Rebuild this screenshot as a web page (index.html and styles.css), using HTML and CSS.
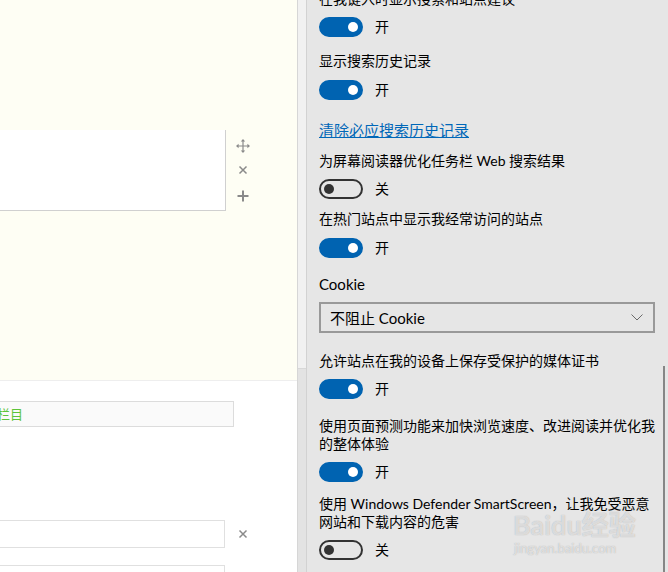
FILE: index.html
```html
<!DOCTYPE html>
<html lang="zh-CN">
<head>
    <meta charset="UTF-8">
    <meta name="viewport" content="width=device-width, initial-scale=1.0">
    <title>高级设置</title>
    <link rel="stylesheet" href="styles.css">
</head>
<body>
<div class="screen">

    <!-- 左侧：被设置面板遮住的网页 -->
    <div class="page">
        <div class="page-top">
            <div class="widget-row">
                <div class="widget-box"></div>
                <div class="widget-tools">
                    <svg class="tool-move" width="14" height="14" viewBox="0 0 14 14">
                        <path d="M7 1v12M1 7h12" stroke="#8a8a8a" stroke-width="1.2" fill="none"/>
                        <path d="M7 0l2.2 2.6H4.8zM7 14l2.2-2.6H4.8zM0 7l2.6-2.2v4.4zM14 7l-2.6-2.2v4.4z" fill="#8a8a8a"/>
                    </svg>
                    <svg width="10" height="10" viewBox="0 0 10 10">
                        <path d="M1.5 1.5l7 7M8.5 1.5l-7 7" stroke="#8a8a8a" stroke-width="1.5"/>
                    </svg>
                    <svg width="12" height="12" viewBox="0 0 12 12">
                        <path d="M6 0.5v11M0.5 6h11" stroke="#8a8a8a" stroke-width="2"/>
                    </svg>
                </div>
            </div>
        </div>
        <div class="page-bottom">
            <div class="field">栏目</div>
            <div class="widget-row input-row">
                <div class="input-box"></div>
                <svg class="input-close" width="10" height="10" viewBox="0 0 10 10">
                    <path d="M1.5 1.5l7 7M8.5 1.5l-7 7" stroke="#8a8a8a" stroke-width="1.5"/>
                </svg>
            </div>
            <div class="input-box input-last"></div>
        </div>
    </div>

    <div class="page-scroll"><div class="page-thumb"></div></div>

    <!-- 右侧：高级设置面板 -->
    <div class="panel">
        <div class="panel-body">
            <div class="setting first">
                <div class="label">在我键入时显示搜索和站点建议</div>
                <div class="switch-row"><span class="toggle on"><i></i></span>开</div>
            </div>
            <div class="setting s2">
                <div class="label">显示搜索历史记录</div>
                <div class="switch-row"><span class="toggle on"><i></i></span>开</div>
            </div>
            <a class="link" href="#">清除必应搜索历史记录</a>
            <div class="setting s3">
                <div class="label">为屏幕阅读器优化任务栏 Web 搜索结果</div>
                <div class="switch-row"><span class="toggle"><i></i></span>关</div>
            </div>
            <div class="setting s4">
                <div class="label">在热门站点中显示我经常访问的站点</div>
                <div class="switch-row"><span class="toggle on"><i></i></span>开</div>
            </div>
            <div class="cookie">
                <div class="cookie-label">Cookie</div>
                <div class="select">
                    <span>不阻止 Cookie</span>
                    <svg width="12" height="7" viewBox="0 0 12 7">
                        <path d="M0.5 0.5l5.5 5.5 5.5-5.5" stroke="#6a6a6a" stroke-width="1" fill="none"/>
                    </svg>
                </div>
            </div>
            <div class="setting s5">
                <div class="label">允许站点在我的设备上保存受保护的媒体证书</div>
                <div class="switch-row"><span class="toggle on"><i></i></span>开</div>
            </div>
            <div class="setting s6">
                <div class="label multi">使用页面预测功能来加快浏览速度、改进阅读并优化我的整体体验</div>
                <div class="switch-row"><span class="toggle on"><i></i></span>开</div>
            </div>
            <div class="setting s7">
                <div class="label multi">使用 Windows Defender SmartScreen，让我免受恶意<br>网站和下载内容的危害</div>
                <div class="switch-row"><span class="toggle"><i></i></span>关</div>
            </div>
        </div>

        <div class="panel-scroll"></div>

        <div class="watermark">
            <div class="wm-logo">Baidu经验</div>
            <div class="wm-url">jingyan.baidu.com</div>
        </div>
    </div>

</div>
</body>
</html>
```

FILE: styles.css
```css
/* 整体 */
body { margin: 0; font-family: Lato, "Noto Sans CJK SC", sans-serif; }
.screen { display: flex; width: 668px; height: 572px; overflow: hidden; }

/* 左侧网页 */
.page { width: 297px; flex: none; display: flex; flex-direction: column; }
.page-top { flex: none; height: 380px; background-color: #fefef4; padding-top: 130px; box-sizing: border-box; }
.widget-row { display: flex; align-items: flex-start; }
.widget-box { width: 225px; height: 80px; background-color: #fff; border-right: 1px solid #d0d0d0; border-bottom: 1px solid #d0d0d0; }
.widget-tools { display: flex; flex-direction: column; align-items: center; width: 14px; margin-left: 10px; padding-top: 9px; gap: 12px; }
.widget-tools svg:nth-child(3) { margin-top: 3px; }
.page-bottom { flex: 1; background-color: #fff; border-top: 1px solid #eeeeee; padding-top: 20px; }
.field { width: 233px; height: 24px; line-height: 24px; background-color: #fafafa; border: 1px solid #dcdcdc; border-left: none; color: #5cc43a; font-size: 13px; font-family: "Noto Sans CJK SC", sans-serif; text-indent: -3px; overflow: hidden; }
.input-row { margin-top: 93px; align-items: center; }
.input-box { width: 225px; height: 28px; border: 1px solid #e0e0e0; border-left: none; box-sizing: border-box; }
.input-close { margin-left: 13px; }
.input-last { margin-top: 17px; height: 30px; }

/* 网页滚动条 */
.page-scroll { width: 10px; flex: none; box-sizing: border-box; border-left: 1px solid #d6d6d6; border-right: 1px solid #d2d2d2; background-color: #e3e3e3; }
.page-thumb { height: 368px; background-color: #f1f1f1; border-bottom: 1px solid #d8d8d8; }

/* 设置面板 */
.panel { flex: 1; position: relative; background-color: #e6e6e6; color: #000; overflow: hidden; }
.panel-body { padding: 0 13px 0 12px; display: flex; flex-direction: column; align-items: flex-start; }
.setting { display: flex; flex-direction: column; align-items: flex-start; }
.label { font-size: 14px; line-height: 20px; }
.label.multi { line-height: 17.5px; }
.switch-row { display: flex; align-items: center; gap: 12px; font-size: 14px; line-height: 20px; margin-top: 8px; }

.toggle { width: 44px; height: 20px; border-radius: 10px; box-sizing: border-box; display: flex; align-items: center; border: 2px solid #333; padding: 0 3px; }
.toggle i { width: 10px; height: 10px; border-radius: 50%; background-color: #333; }
.toggle.on { background-color: #0063b1; border-color: #0063b1; justify-content: flex-end; }
.toggle.on i { background-color: #fff; }

.first { margin-top: -11px; }
.s2 { margin-top: 14px; }
.s2 .switch-row { margin-top: 9px; }
.link { margin-top: 20px; font-size: 15px; line-height: 20px; color: #0067b8; text-decoration: underline; }
.s3 { margin-top: 11px; }
.s4 { margin-top: 10px; }
.s4 .switch-row { margin-top: 9px; }
.cookie { margin-top: 16px; width: 100%; }
.cookie-label { font-size: 15px; line-height: 20px; }
.select { margin-top: 8px; height: 31px; border: 2px solid #999; box-sizing: border-box; display: flex; align-items: center; justify-content: space-between; padding: 0 10px 0 9px; font-size: 15px; }
.s5 { margin-top: 18px; }
.s6 { margin-top: 18px; }
.s6 .switch-row, .s7 .switch-row { margin-top: 10px; }
.s7 { margin-top: 13px; }

.panel-scroll { position: absolute; right: 3px; top: 366px; bottom: 0; width: 2px; background-color: #868686; }

/* 水印 */
.watermark { position: absolute; left: 206px; top: 510px; color: rgba(255,255,255,0.6); text-shadow: 0 0 1px rgba(120,120,120,0.6); }
.wm-logo { font-size: 27px; font-weight: bold; line-height: 30px; }
.wm-url { font-size: 13px; line-height: 16px; padding-left: 1px; }
```
